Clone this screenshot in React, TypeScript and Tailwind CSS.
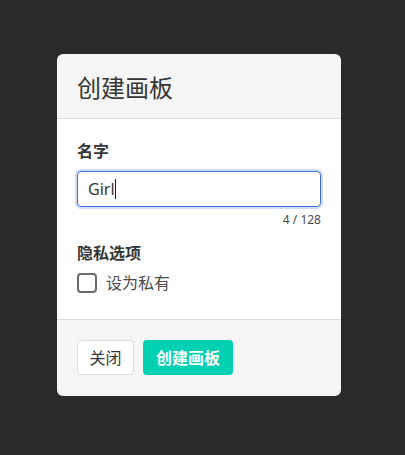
import React from "react";

export default function App() {
  const font = { fontFamily: '"Noto Sans", "Noto Sans CJK SC", sans-serif' };
  return (
    <div className="w-[405px] h-[455px] bg-[#2a2a28] flex items-start justify-start pl-[57px] pt-[54px]" style={font}>
      <div className="w-[284px] rounded-[6px] overflow-hidden flex flex-col">
        <header className="bg-[#f5f5f5] border-b border-[#dbdbdb] px-5 pt-[22px] pb-[18px]">
          <h1 className="text-[24px] leading-[24px] text-[#363636]">创建画板</h1>
        </header>
        <section className="bg-white px-5 pt-5 pb-[26px]">
          <label className="block text-[16px] leading-[24px] font-bold text-[#363636]">名字</label>
          <div className="mt-2 h-[36px] rounded-[4px] border border-[#3b6fdc] shadow-[0_0_0_2px_rgba(72,120,220,0.25)] flex items-center px-[10px]">
            <span className="text-[16px] text-[#363636] leading-[24px]">Girl</span>
            <span className="w-px h-[20px] bg-[#222]" />
          </div>
          <div className="mt-1 text-right text-[12px] leading-[18px] text-[#4a4a4a]">4 / 128</div>
          <div className="mt-3 text-[16px] leading-[24px] font-bold text-[#363636]">隐私选项</div>
          <div className="mt-2 flex items-center gap-[9px] h-[20px]">
            <span className="w-[20px] h-[20px] rounded-[4px] border-2 border-[#6b6b6b] bg-white" />
            <span className="text-[16px] leading-[24px] text-[#4a4a4a]">设为私有</span>
          </div>
        </section>
        <footer className="bg-[#f5f5f5] border-t border-[#dbdbdb] px-5 pt-5 pb-[21px] flex gap-[9px]">
          <button className="h-[35px] px-[11.5px] rounded-[4px] border border-[#dbdbdb] bg-white text-[16px] text-[#363636]">关闭</button>
          <button className="h-[35px] px-[12px] rounded-[4px] border border-transparent bg-[#00d1b2] text-[16px] font-bold text-white">创建画板</button>
        </footer>
      </div>
    </div>
  );
}
